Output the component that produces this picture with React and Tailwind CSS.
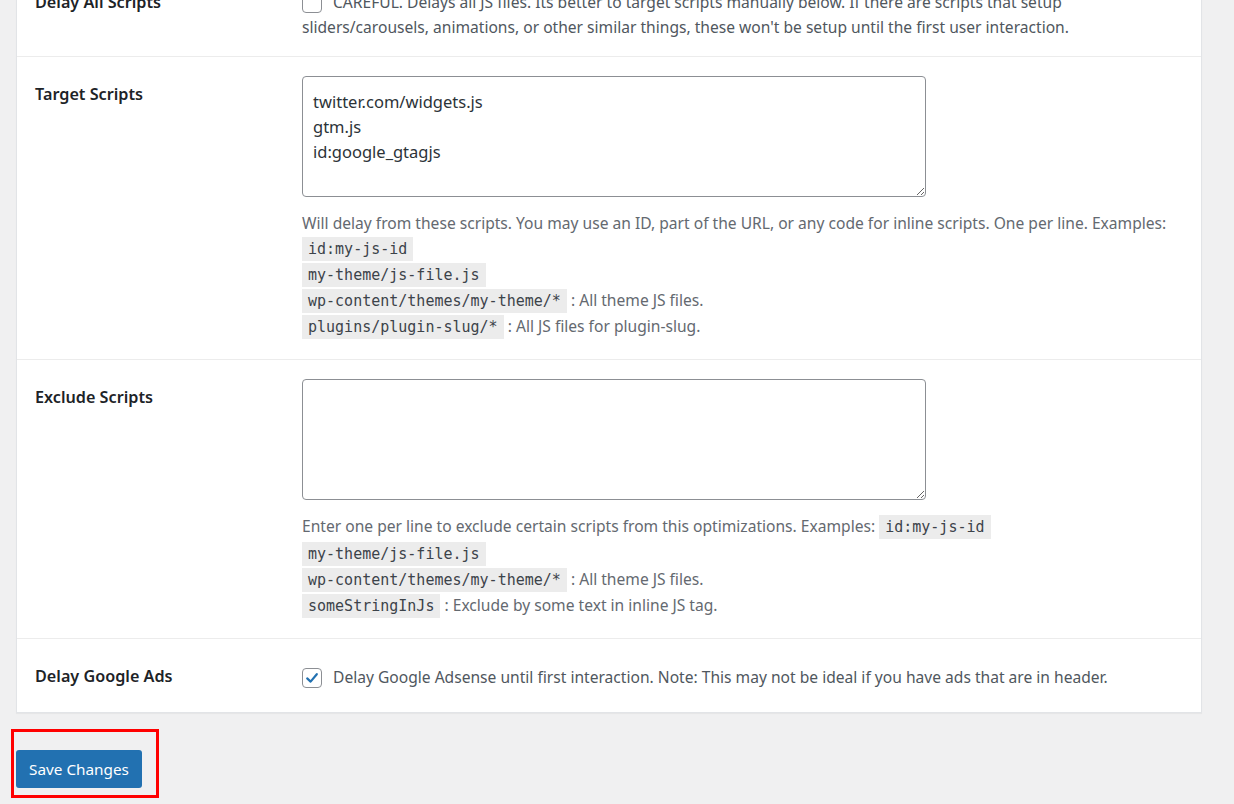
import React from "react";

const body = { fontFamily: '"Noto Sans", "Open Sans", sans-serif' };
const mono = { fontFamily: '"DejaVu Sans Mono", "Liberation Mono", monospace' };

function Code({ children }) {
  return (
    <code
      style={mono}
      className="inline-block h-[24px] bg-[#ececec] px-[6px] text-[15px] leading-[24px] text-[#3c434a]"
    >
      {children}
    </code>
  );
}

function CodeLine({ code, note, first }) {
  return (
    <div className={(first ? "mt-[1px]" : "mt-[2px]") + " h-[24px] leading-[24px]"}>
      <Code>{code}</Code>
      {note ? <span> {note}</span> : null}
    </div>
  );
}

function Label({ children, className = "" }) {
  return (
    <div className={"w-[285px] shrink-0 pl-[18px] " + className}>
      <div className="text-[16.2px] font-semibold leading-[24px] text-[#1d2327]">{children}</div>
    </div>
  );
}

function Checkbox({ checked }) {
  return (
    <span className="inline-flex h-[20px] w-[20px] shrink-0 items-center justify-center rounded-[4px] border border-[#8c8f94] bg-white">
      {checked ? (
        <svg width="16" height="16" viewBox="0 0 16 16">
          <path d="M3.2 8.4 L6.6 11.6 L12.8 4.2" fill="none" stroke="#2271b1" strokeWidth="2.2" strokeLinecap="round" strokeLinejoin="round" />
        </svg>
      ) : null}
    </span>
  );
}

export default function App() {
  return (
    <div style={body} className="min-h-screen overflow-hidden bg-[#f0f0f1] text-[15.6px] text-[#3c434a]">
      <div className="-mt-[31px] pl-[16px] pr-[32px]">
        <div className="border border-[#e2e4e7] bg-white shadow-[0_1px_1px_rgba(0,0,0,0.04)]">
          {/* Row 1 */}
          <div className="flex border-b border-[#ececec] pt-[20px] pb-[16px]">
            <Label>Delay All Scripts</Label>
            <div className="flex-1">
              <div className="flex h-[25px] items-center gap-[11px] leading-[25px] text-[#50575e]">
                <Checkbox checked={false} />
                <span className="whitespace-nowrap">CAREFUL. Delays all JS files. Its better to target scripts manually below. If there are scripts that setup</span>
              </div>
              <div className="h-[25px] whitespace-nowrap leading-[25px] text-[#50575e]">
                sliders/carousels, animations, or other similar things, these won't be setup until the first user interaction.
              </div>
            </div>
          </div>

          {/* Row 2 */}
          <div className="flex border-b border-[#ececec] pt-[19px] pb-[21px]">
            <Label className="pt-[6px]">Target Scripts</Label>
            <div className="flex-1">
              <textarea
                style={body}
                className="block h-[121px] w-[624px] rounded-[4px] border border-[#8c8f94] bg-white px-[10px] pt-[12px] text-[16.5px] leading-[25px] text-[#2c3338] outline-none"
                defaultValue={"twitter.com/widgets.js\ngtm.js\nid:google_gtagjs"}
              />
              <div className="mt-[15px] text-[#646970]">
                <div className="h-[23px] whitespace-nowrap leading-[23px]">
                  Will delay from these scripts. You may use an ID, part of the URL, or any code for inline scripts. One per line. Examples:
                </div>
                <CodeLine first code="id:my-js-id" />
                <CodeLine code="my-theme/js-file.js" />
                <CodeLine code="wp-content/themes/my-theme/*" note=": All theme JS files." />
                <CodeLine code="plugins/plugin-slug/*" note=": All JS files for plugin-slug." />
              </div>
            </div>
          </div>

          {/* Row 3 */}
          <div className="flex border-b border-[#ececec] pt-[19px] pb-[21px]">
            <Label className="pt-[6px]">Exclude Scripts</Label>
            <div className="flex-1">
              <textarea
                style={body}
                className="block h-[121px] w-[624px] rounded-[4px] border border-[#8c8f94] bg-white px-[10px] pt-[12px] text-[16.5px] leading-[25px] text-[#2c3338] outline-none"
                defaultValue=""
              />
              <div className="mt-[14px] text-[#646970]">
                <div className="h-[25px] whitespace-nowrap leading-[25px]">
                  Enter one per line to exclude certain scripts from this optimizations. Examples: <Code>id:my-js-id</Code>
                </div>
                <CodeLine code="my-theme/js-file.js" />
                <CodeLine code="wp-content/themes/my-theme/*" note=": All theme JS files." />
                <CodeLine code="someStringInJs" note=": Exclude by some text in inline JS tag." />
              </div>
            </div>
          </div>

          {/* Row 4 */}
          <div className="flex pt-[26px] pb-[22px]">
            <Label className="-mt-[1px]">Delay Google Ads</Label>
            <div className="flex h-[25px] flex-1 items-center gap-[11px] leading-[25px] text-[#50575e]">
              <Checkbox checked={true} />
              <span className="whitespace-nowrap">Delay Google Adsense until first interaction. Note: This may not be ideal if you have ads that are in header.</span>
            </div>
          </div>
        </div>

        <div className="mt-[16px] -ml-[5px] inline-block border-[3px] border-[#ff0000] pt-[18px] pr-[14px] pb-[7px] pl-[2px]">
          <button className="block h-[38px] w-[126px] rounded-[3px] bg-[#2271b1] text-[15.3px] text-white">
            Save Changes
          </button>
        </div>
      </div>
    </div>
  );
}
